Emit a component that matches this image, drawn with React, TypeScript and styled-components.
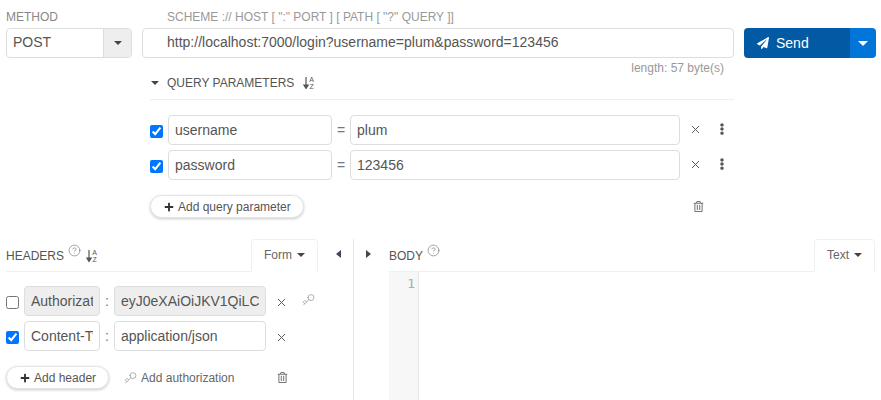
import React from 'react'
import styled, { createGlobalStyle } from 'styled-components'
import { FaPaperPlane, FaPlus, FaEllipsisV, FaRegTrashAlt } from 'react-icons/fa'
import { CircleHelp, Key, X } from 'lucide-react'

const GlobalStyle = createGlobalStyle`
  html, body {
    margin: 0;
    padding: 0;
    background: #fff;
    overflow: hidden;
  }
  body {
    font-family: "Liberation Sans", Arial, sans-serif;
    color: #555;
  }
`

const params = [
  { name: 'username', value: 'plum' },
  { name: 'password', value: '123456' },
]

// little a-z sort icon, the letters stay real text
const SortAz = () => (
  <SortIcon>
    <svg width="12" height="14" viewBox="0 0 12 14">
      <path d="M3 1v10M0.8 9l2.2 3.4L5.2 9z" fill="#555" stroke="#555" strokeWidth="1.2" />
      <text x="6.2" y="6" fontSize="7" fontFamily="Liberation Sans" fill="#555">A</text>
      <text x="6.6" y="13" fontSize="7" fontFamily="Liberation Sans" fill="#555">Z</text>
    </svg>
  </SortIcon>
)

const App = () => {
  return (
    <Page>
      <GlobalStyle />
      <Top>
        <MethodCol>
          <FieldLabel>METHOD</FieldLabel>
          <MethodSelect>
            <MethodValue>POST</MethodValue>
            <MethodCaret>
              <Caret />
            </MethodCaret>
          </MethodSelect>
        </MethodCol>

        <UrlCol>
          <UrlLabel>SCHEME :// HOST [ ":" PORT ] [ PATH [ "?" QUERY ]]</UrlLabel>
          <UrlInput defaultValue="http://localhost:7000/login?username=plum&password=123456" />
          <LengthText>length: 57 byte(s)</LengthText>

          <QuerySection>
            <QueryHeader>
              <QueryCaret>
                <Caret />
              </QueryCaret>
              <span>QUERY PARAMETERS</span>
              <SortAz />
            </QueryHeader>

            <QueryRows>
              {params.map((p) => (
                <Row key={p.name}>
                  <Check type="checkbox" defaultChecked />
                  <TextField $width={164} defaultValue={p.name} />
                  <Sep $width={18}>=</Sep>
                  <TextField $width={330} defaultValue={p.value} />
                  <RemoveBtn $left={9} $up>
                    <X size={13} strokeWidth={1.8} />
                  </RemoveBtn>
                  <MoreBtn>
                    <FaEllipsisV />
                  </MoreBtn>
                </Row>
              ))}
            </QueryRows>

            <QueryActions>
              <PillButton>
                <FaPlus />
                Add query parameter
              </PillButton>
              <QueryTrash>
                <FaRegTrashAlt />
              </QueryTrash>
            </QueryActions>
          </QuerySection>
        </UrlCol>

        <SendButton>
          <SendMain>
            <FaPaperPlane />
            Send
          </SendMain>
          <SendCaret>
            <Caret $color="#fff" $size={5} />
          </SendCaret>
        </SendButton>
      </Top>

      <Bottom>
        <HeadersPane>
          <HeadersCol>
            <PaneHeader>
              <PaneTitle>
                HEADERS
                <HelpIcon>
                  <CircleHelp size={13} strokeWidth={1.1} />
                </HelpIcon>
                <SortAz />
              </PaneTitle>
              <ModeTab $width={67}>
                Form
                <Caret />
              </ModeTab>
            </PaneHeader>

            <HeaderRows>
              <Row>
                <Check type="checkbox" />
                <TextField $width={76} $disabled defaultValue="Authorization" />
                <Sep $width={14}>:</Sep>
                <TextField $width={152} $disabled defaultValue="eyJ0eXAiOiJKV1QiLCJhbGciOiJIUzI1NiJ9" />
                <RemoveBtn $left={9}>
                  <X size={13} strokeWidth={1.8} />
                </RemoveBtn>
                <RowKey>
                  <Key size={13} strokeWidth={1.2} />
                </RowKey>
              </Row>
              <Row>
                <Check type="checkbox" defaultChecked />
                <TextField $width={76} defaultValue="Content-Type" />
                <Sep $width={14}>:</Sep>
                <TextField $width={152} defaultValue="application/json" />
                <RemoveBtn $left={9}>
                  <X size={13} strokeWidth={1.8} />
                </RemoveBtn>
              </Row>
            </HeaderRows>

            <HeaderActions>
              <PillButton>
                <FaPlus />
                Add header
              </PillButton>
              <AuthLink>
                <Key size={13} strokeWidth={1.2} />
                Add authorization
              </AuthLink>
              <HeaderTrash>
                <FaRegTrashAlt />
              </HeaderTrash>
            </HeaderActions>
          </HeadersCol>
          <CollapseLeft />
        </HeadersPane>

        <BodyPane>
          <CollapseRight />
          <BodyCol>
            <PaneHeader>
              <PaneTitle>
                BODY
                <HelpIcon>
                  <CircleHelp size={13} strokeWidth={1.1} />
                </HelpIcon>
              </PaneTitle>
              <ModeTab $width={61}>
                Text
                <Caret />
              </ModeTab>
            </PaneHeader>
            <Editor>
              <Gutter>1</Gutter>
            </Editor>
          </BodyCol>
        </BodyPane>
      </Bottom>
    </Page>
  )
}

export default App

const Page = styled.div`
  width: 881px;
  height: 400px;
  overflow: hidden;
  font-size: 14px;
`

const Top = styled.div`
  display: flex;
  align-items: flex-start;
  padding: 10px 0 0 6px;
  height: 229px;
  box-sizing: border-box;
`

const MethodCol = styled.div`
  width: 126px;
`

const FieldLabel = styled.div`
  height: 18px;
  line-height: 14px;
  font-size: 12px;
  color: #888;
`

const MethodSelect = styled.div`
  display: flex;
  height: 30px;
  box-sizing: border-box;
  border: 1px solid #ddd;
  border-radius: 4px;
  overflow: hidden;
`

const MethodValue = styled.div`
  flex: 1;
  padding-left: 6px;
  line-height: 27px;
  color: #555;
`

const MethodCaret = styled.div`
  width: 27px;
  background: #eee;
  border-left: 1px solid #ddd;
  display: flex;
  align-items: center;
  justify-content: center;
`

const Caret = styled.i<{ $color?: string; $size?: number }>`
  display: inline-block;
  width: 0;
  height: 0;
  border-top: ${(p) => p.$size || 4}px solid ${(p) => p.$color || '#444'};
  border-left: ${(p) => p.$size || 4}px solid transparent;
  border-right: ${(p) => p.$size || 4}px solid transparent;
`

const UrlCol = styled.div`
  width: 592px;
  margin-left: 10px;
`

const UrlLabel = styled(FieldLabel)`
  padding-left: 25px;
  color: #999;
`

const UrlInput = styled.input`
  display: block;
  width: 100%;
  height: 30px;
  box-sizing: border-box;
  border: 1px solid #ddd;
  border-radius: 4px;
  padding: 0 0 2px 24px;
  font: 14px "Liberation Sans", Arial, sans-serif;
  color: #555;
  outline: none;
`

const LengthText = styled.div`
  height: 18px;
  line-height: 21px;
  text-align: right;
  padding-right: 10px;
  font-size: 12px;
  color: #999;
`

const QuerySection = styled.div`
  margin-left: 8px;
`

const QueryHeader = styled.div`
  display: flex;
  align-items: center;
  height: 24px;
  box-sizing: border-box;
  padding-bottom: 9px;
  border-bottom: 1px solid #eee;
  font-size: 12px;
  color: #555;
`

const QueryCaret = styled.span`
  display: flex;
  width: 17px;
  padding-left: 1px;
  box-sizing: border-box;
`

const SortIcon = styled.span`
  display: inline-flex;
  margin-left: 9px;
`

const QueryRows = styled.div`
  display: flex;
  flex-direction: column;
  gap: 5px;
  margin-top: 15px;
`

const Row = styled.div`
  display: flex;
  align-items: center;
  height: 30px;
`

const Check = styled.input`
  width: 13px;
  height: 13px;
  margin: 2px 5px 0 0;
  flex: none;
`

const TextField = styled.input<{ $width: number; $disabled?: boolean }>`
  width: ${(p) => p.$width}px;
  height: 30px;
  flex: none;
  box-sizing: border-box;
  padding: 0 6px;
  border: 1px solid #ddd;
  border-radius: 4px;
  background: ${(p) => (p.$disabled ? '#eee' : '#fff')};
  font: 14px "Liberation Sans", Arial, sans-serif;
  color: #555;
  outline: none;
`

const Sep = styled.span<{ $width: number }>`
  width: ${(p) => p.$width}px;
  flex: none;
  text-align: center;
  color: #777;
`

const RemoveBtn = styled.span<{ $left: number; $up?: boolean }>`
  display: inline-flex;
  margin-left: ${(p) => p.$left}px;
  margin-top: ${(p) => (p.$up ? '-2px' : '2px')};
  color: #555;
`

const MoreBtn = styled.span`
  display: inline-flex;
  margin: -2px 0 0 14px;
  font-size: 12px;
  color: #555;
`

const RowKey = styled.span`
  display: inline-flex;
  margin: -3px 0 0 14px;
  color: #888;
  svg {
    transform: rotate(180deg);
  }
`

const QueryActions = styled.div`
  display: flex;
  align-items: center;
  margin-top: 15px;
`

const PillButton = styled.button`
  display: inline-flex;
  align-items: center;
  gap: 4px;
  height: 23px;
  padding: 0 12px 0 13px;
  box-sizing: border-box;
  background: #fff;
  border: 1px solid #e4e4e4;
  border-radius: 12px;
  box-shadow: 0 1px 3px rgba(0, 0, 0, 0.2);
  font: 12px "Liberation Sans", Arial, sans-serif;
  color: #555;
  white-space: nowrap;
  svg {
    font-size: 10px;
    color: #333;
  }
`

const QueryTrash = styled.span`
  display: inline-flex;
  margin-left: 389px;
  font-size: 11px;
  color: #777;
`

const SendButton = styled.div`
  display: flex;
  width: 132px;
  height: 30px;
  margin: 18px 0 0 10px;
  border-radius: 4px;
  overflow: hidden;
`

const SendMain = styled.div`
  flex: 1;
  display: flex;
  align-items: center;
  gap: 7px;
  padding: 0 0 1px 13px;
  background: #025aa5;
  color: #fff;
  font-size: 14px;
  svg {
    font-size: 12px;
  }
`

const SendCaret = styled.div`
  width: 26px;
  background: #0275d8;
  display: flex;
  align-items: center;
  justify-content: center;
`

const Bottom = styled.div`
  display: flex;
  height: 161px;
  margin-top: 10px;
`

const HeadersPane = styled.div`
  width: 354px;
  box-sizing: border-box;
  padding-left: 6px;
  border-right: 1px solid #e8e8e8;
  display: flex;
`

const HeadersCol = styled.div`
  width: 312px;
`

const PaneHeader = styled.div`
  display: flex;
  justify-content: space-between;
  align-items: flex-end;
  height: 33px;
  border-bottom: 1px solid #f0f0f0;
  box-sizing: border-box;
`

const PaneTitle = styled.div`
  display: flex;
  align-items: center;
  height: 32px;
  padding-top: 2px;
  box-sizing: border-box;
  font-size: 12px;
  color: #555;
  ${SortIcon} {
    margin-left: 5px;
  }
`

const HelpIcon = styled.span`
  display: inline-flex;
  margin: -11px 0 0 4px;
  color: #666;
`

const ModeTab = styled.div<{ $width: number }>`
  width: ${(p) => p.$width}px;
  height: 33px;
  margin-bottom: -1px;
  padding-bottom: 2px;
  box-sizing: border-box;
  display: flex;
  align-items: center;
  justify-content: center;
  gap: 5px;
  background: #fff;
  border: 1px solid #f0f0f0;
  border-bottom-color: #fff;
  border-radius: 4px 4px 0 0;
  font-size: 12px;
  color: #666;
`

const HeaderRows = styled.div`
  display: flex;
  flex-direction: column;
  gap: 5px;
  margin-top: 14px;
`

const HeaderActions = styled.div`
  display: flex;
  align-items: center;
  margin-top: 15px;
`

const AuthLink = styled.span`
  display: inline-flex;
  align-items: center;
  gap: 4px;
  margin-left: 15px;
  font-size: 12px;
  color: #666;
  svg {
    color: #888;
    transform: rotate(180deg);
  }
`

const HeaderTrash = styled.span`
  display: inline-flex;
  margin-left: 43px;
  font-size: 11px;
  color: #777;
`

const CollapseLeft = styled.i`
  align-self: flex-start;
  width: 0;
  height: 0;
  margin: 11px 0 0 18px;
  border-top: 4px solid transparent;
  border-bottom: 4px solid transparent;
  border-right: 5px solid #445;
`

const CollapseRight = styled.i`
  align-self: flex-start;
  width: 0;
  height: 0;
  margin: 11px 0 0 12px;
  border-top: 4px solid transparent;
  border-bottom: 4px solid transparent;
  border-left: 5px solid #445;
`

const BodyPane = styled.div`
  display: flex;
  flex: 1;
`

const BodyCol = styled.div`
  width: 486px;
  margin-left: 18px;
`

const Editor = styled.div`
  height: 128px;
  display: flex;
`

const Gutter = styled.div`
  width: 30px;
  box-sizing: border-box;
  padding: 4px 3px 0 0;
  text-align: right;
  background: #f7f7f7;
  border-right: 1px solid #e6e6e6;
  font: 13px/16px "DejaVu Sans Mono", monospace;
  color: #aaa;
`
